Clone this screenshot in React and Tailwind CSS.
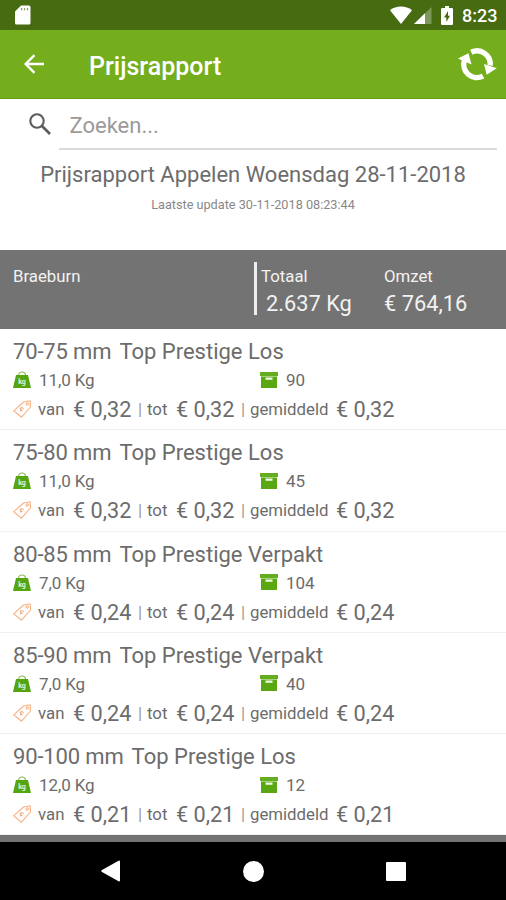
import React from "react";

const rows = [
  { id: 1, size: "70-75 mm", name: "Top Prestige Los", weight: "11,0 Kg", boxes: "90", price: "€ 0,32" },
  { id: 2, size: "75-80 mm", name: "Top Prestige Los", weight: "11,0 Kg", boxes: "45", price: "€ 0,32" },
  { id: 3, size: "80-85 mm", name: "Top Prestige Verpakt", weight: "7,0 Kg", boxes: "104", price: "€ 0,24" },
  { id: 4, size: "85-90 mm", name: "Top Prestige Verpakt", weight: "7,0 Kg", boxes: "40", price: "€ 0,24" },
  { id: 5, size: "90-100 mm", name: "Top Prestige Los", weight: "12,0 Kg", boxes: "12", price: "€ 0,21" },
];

function StatusBar() {
  return (
    <div className="flex h-[30px] items-center bg-[#466b10] text-white">
      <svg className="ml-[15px] h-5 w-4" viewBox="0 0 16 20" fill="currentColor">
        <path d="M6 .5h8a1.5 1.5 0 0 1 1.5 1.5v16a1.5 1.5 0 0 1-1.5 1.5H1.5A1.5 1.5 0 0 1 0 18V6.5z" />
        <path d="M6.5 3v2.2M9.5 3v2.2M12.5 3v2.2" stroke="#8a9c6a" strokeWidth="1.3" />
      </svg>
      <svg className="ml-auto h-[18px] w-[22px]" viewBox="0 0 22 18" fill="currentColor">
        <path d="M0 4.2C6 -.8 16 -.8 22 4.2L11 18z" />
      </svg>
      <svg className="ml-[2px] h-[17px] w-[18px]" viewBox="0 0 18 17" fill="currentColor">
        <path d="M0 17 17.5 0v17z" opacity=".3" />
        <path d="M0 17 11 6.3V17z" />
      </svg>
      <svg className="ml-[9px] h-[19px] w-[12px]" viewBox="0 0 12 19" fill="currentColor">
        <path d="M4 0h4v2h2.8A1.2 1.2 0 0 1 12 3.2v14.6a1.2 1.2 0 0 1-1.2 1.2H1.2A1.2 1.2 0 0 1 0 17.8V3.2A1.2 1.2 0 0 1 1.2 2H4z" />
        <path d="M7 5 3 11.5h2.3V16L9 9.8H7z" fill="#466b10" />
      </svg>
      <span className="ml-[9px] w-[44px] pt-px text-[18px] leading-[30px] font-medium">8:23</span>
    </div>
  );
}

function Header() {
  return (
    <div className="flex h-[69px] items-center border-b border-[#62a010] bg-[#74ae1c] text-white">
      <svg className="ml-[24px] h-5 w-5" viewBox="0 0 20 20" fill="none" stroke="currentColor" strokeWidth="2.4">
        <path d="M20 10H2M10.5 1.2 1.7 10l8.8 8.8" />
      </svg>
      <h1 className="mt-[5px] ml-[45px] text-[25px] leading-8 font-medium">Prijsrapport</h1>
      <svg className="mt-[-1px] mr-[9px] ml-auto h-[34px] w-[39px]" viewBox="0 0 39 34" fill="none" stroke="currentColor" strokeWidth="5.4">
        <path d="M13.3 5.3A13.2 13.2 0 0 1 32.2 18.5" />
        <path d="M25 29.1A13.2 13.2 0 0 1 6.3 13.5" />
        <path d="M26 17 38.8 21.3 28.7 27.8z" fill="currentColor" stroke="none" />
        <path d="M13.5 17.5 10.5 6.3 0 11.5z" fill="currentColor" stroke="none" />
      </svg>
    </div>
  );
}

function SearchField() {
  return (
    <div className="flex h-[51px] items-end">
      <svg className="mb-[15px] ml-[29px] h-[22px] w-[22px]" viewBox="0 0 22 22" fill="none" stroke="#5c5c5c" strokeWidth="2.1">
        <circle cx="8" cy="8" r="6.7" />
        <path d="m13 13 8 8" strokeWidth="2.6" />
      </svg>
      <div className="mr-[9px] ml-[8px] h-[46px] flex-1 border-b-2 border-[#dadada] pl-[10.5px] text-[22px] leading-[43px] text-[#9a9a9a]">
        Zoeken...
      </div>
    </div>
  );
}

function Summary() {
  return (
    <div className="flex h-[79px] bg-[#737373] pt-3 text-[#f2f2f2]">
      <div className="w-[254px] pl-[13px] text-[16.8px] leading-[28px]">Braeburn</div>
      <div className="h-[53px] w-[3px] bg-[#eee]"></div>
      <div className="w-[127px] pl-1">
        <div className="text-[16.8px] leading-[28px]">Totaal</div>
        <div className="pl-[5px] text-[21.8px] leading-[27px]">2.637 Kg</div>
      </div>
      <div>
        <div className="text-[16.8px] leading-[28px]">Omzet</div>
        <div className="text-[21.8px] leading-[27px]">€ 764,16</div>
      </div>
    </div>
  );
}

function WeightIcon() {
  return (
    <svg className="-mt-px h-[17px] w-[18px]" viewBox="0 0 18 17">
      <path d="M5.5 4.5C5.5-.2 12.5-.2 12.5 4.5" fill="none" stroke="#8bbb55" strokeWidth="1.2" />
      <path d="M3 4h12l3 13H0z" fill="#55a510" />
      <text x="9" y="13" textAnchor="middle" fontSize="7" fontWeight="700" fill="#e5f2d5">kg</text>
    </svg>
  );
}

function BoxIcon() {
  return (
    <svg className="-mt-px h-4 w-[18px]" viewBox="0 0 18 16">
      <path d="M0 0h18v4H0z" fill="#65ad20" />
      <path d="M1 4.5h16V16H1z" fill="#59a812" />
      <path d="M1 4h16v.8H1z" fill="#a5d07b" />
      <path d="M5.5 5.5h7v2.3h-7z" fill="#f0f8e8" />
    </svg>
  );
}

function TagIcon() {
  return (
    <svg className="-mt-px h-[18px] w-[18px]" viewBox="0 0 18 18" fill="none" stroke="#f5b386" strokeWidth="1.1">
      <path d="M10.5 2 17.2.8 17.5 7 8.5 17.2.7 10.8z" strokeLinejoin="round" />
      <circle cx="14.3" cy="4" r="1.2" />
      <path d="M6.8 8.5 9.5 11M7.5 11.5 8 7.5l3 1" />
    </svg>
  );
}

function PriceRow({ row }) {
  return (
    <div className="h-[101.25px] border-b border-[#f0f0f0] pt-2 pl-[13px] text-[#6c6c6c]">
      <div className="flex h-[29px] gap-[8px] text-[22px] leading-[30px]">
        <span className="tracking-[-0.15px]">{row.size}</span>
        <span>{row.name}</span>
      </div>
      <div className="flex h-[28px] items-center text-[17px] leading-[28px]">
        <WeightIcon />
        <span className="w-[222px] pl-2 tracking-[-0.1px]">{row.weight}</span>
        <div className="ml-[7px] flex items-center">
          <BoxIcon />
          <span className="pl-2">{row.boxes}</span>
        </div>
      </div>
      <div className="flex h-[31px] items-start text-[16.8px] leading-[31px] whitespace-nowrap">
        <div className="w-[25px] self-center"><TagIcon /></div>
        <span className="w-[35px]">van</span>
        <span className="w-[65px] text-[21.7px] leading-[32px]">{row.price}</span>
        <span className="w-[9px] text-[#999]">|</span>
        <span className="w-[29px]">tot</span>
        <span className="w-[65px] text-[21.7px] leading-[32px]">{row.price}</span>
        <span className="w-[9px] text-[#999]">|</span>
        <span className="w-[86px]">gemiddeld</span>
        <span className="text-[21.7px] leading-[32px]">{row.price}</span>
      </div>
    </div>
  );
}

function NavBar() {
  return (
    <div className="flex h-[58px] items-center bg-black text-white">
      <svg className="ml-[101px] h-[22px] w-[19px]" viewBox="0 0 19 22" fill="currentColor">
        <path d="M18 .5 1 10q-1.5 1 0 2l17 9.5q1 0 1-1V1.5q0-1-1-1z" />
      </svg>
      <div className="ml-[123px] h-[21px] w-[21px] rounded-full bg-white"></div>
      <div className="ml-[122px] h-[19px] w-[20px] rounded-[1px] bg-white"></div>
    </div>
  );
}

function App() {
  return (
    <div className="h-[900px] w-[506px] overflow-hidden bg-white font-['Roboto',sans-serif]">
      <StatusBar />
      <Header />
      <SearchField />
      <div className="h-[100px] text-center text-[#6c6c6c]">
        <div className="pt-[10px] text-[22px] leading-[30px]">Prijsrapport Appelen Woensdag 28-11-2018</div>
        <div className="pt-[5px] text-[12.7px] leading-[20px] text-[#888]">Laatste update 30-11-2018 08:23:44</div>
      </div>
      <Summary />
      <div className="h-[506px] overflow-hidden">
        {rows.map((row) => (
          <PriceRow key={row.id} row={row} />
        ))}
      </div>
      <div className="h-[7px] bg-[#737373]"></div>
      <NavBar />
    </div>
  );
}

export default App;
